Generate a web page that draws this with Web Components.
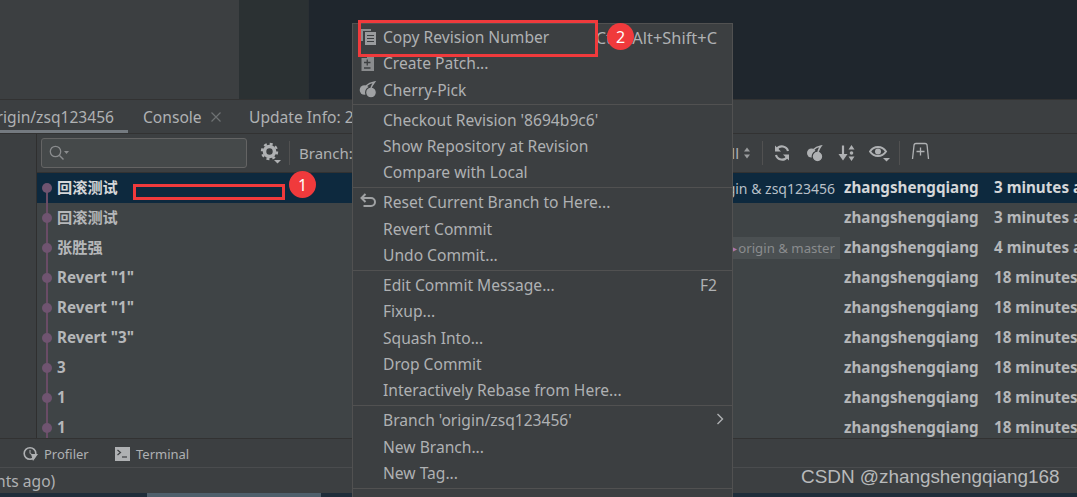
<!DOCTYPE html>
<html><head><meta charset="utf-8">
<style>
html,body{margin:0;padding:0;background:#3c3f41;overflow:hidden}
body{width:1077px;height:497px;font-family:"Noto Sans","Noto Sans CJK SC",sans-serif;font-size:15.6px;color:#afb1b3}
</style></head><body>
<ide-app></ide-app>
<script>
function el(name,css,html){customElements.define(name,class extends HTMLElement{constructor(){super();this.attachShadow({mode:'open'}).innerHTML='<style>'+css+'</style>'+(typeof html==='function'?html(this):html)}})}

el('top-panes',`:host{display:grid;grid-template-columns:239px 70px 1fr;height:99px;border-bottom:1px solid #323232}
.a{background:#3c3f41}.b{background:#2b3133;border-right:1px solid #2a2f33}.c{background:#1f262d}`,'<div class="a"></div><div class="b"></div><div class="c"></div>');

el('tab-bar',`:host{display:flex;height:33px;background:#3c3f41;border-bottom:1px solid #323232;align-items:center;overflow:hidden;white-space:nowrap;color:#afb1b3;position:relative;font-size:15.6px}
.t{display:flex;align-items:center;height:100%;position:relative;box-sizing:border-box;flex:none}
.a{width:128px;justify-content:flex-end;padding-right:14px}
.a::after{content:"";position:absolute;left:0;right:0;bottom:0;height:3px;background:#747a80}
.c{margin-left:15px;width:106px}
svg{margin-left:9px}`,`<div class="t a">origin/zsq123456</div><div class="t c">Console<svg width="10" height="10" viewBox="0 0 10 10"><path d="M.5.5l9 9M9.500.5l-9 9" stroke="#6e7173" stroke-width="1.200"/></svg></div><div class="t">Update Info: 2</div>`);

el('log-toolbar',`:host{display:flex;height:38px;align-items:center;background:#3c3f41;border-bottom:1px solid #323232;padding-left:4px;white-space:nowrap;overflow:hidden;font-size:15px}
.s{width:206px;height:30px;box-sizing:border-box;background:#45494a;border:1px solid #646464;border-radius:3px;display:flex;align-items:center;padding-left:6px;flex:none}
.g{margin-left:13px;flex:none}.sep{width:1px;height:24px;background:#515151;flex:none}
.b{margin-left:9px;width:440px;flex:none;display:flex;justify-content:space-between}
.i{flex:none;display:block}`,`<div class="s"><svg width="22" height="18" viewBox="0 0 22 18"><circle cx="7.500" cy="7.500" r="5.200" fill="none" stroke="#8a8c8e" stroke-width="1.300"/><path d="M11.500 11.500l4 4" stroke="#8a8c8e" stroke-width="1.500"/><path d="M16 7h5l-2.500 3z" fill="#8a8c8e"/></svg></div>
<svg class="g" width="22" height="22" viewBox="0 0 22 22"><circle cx="9.500" cy="9.500" r="5" fill="none" stroke="#afb1b3" stroke-width="3.600"/><circle cx="9.500" cy="9.500" r="7.600" fill="none" stroke="#afb1b3" stroke-width="2.200" stroke-dasharray="3 2.970"/><path d="M14 18h7l-3.500 3.500z" fill="#afb1b3"/></svg>
<div class="sep" style="margin-left:7px"></div><div class="b"><span>Branch:</span><span>All</span></div>
<svg class="i" width="10" height="14" viewBox="0 0 10 14" style="margin-left:3px"><path d="M5 1.500l3 4h-6zM5 12.500l-3-4h6z" fill="#9a9c9e"/></svg>
<div class="sep" style="margin-left:10px"></div>
<svg class="i" style="margin-left:10px" width="18" height="18" viewBox="0 0 18 18"><path d="M15 7A6.300 6.300 0 0 0 3.800 5M3 11A6.300 6.300 0 0 0 14.200 13" fill="none" stroke="#afb1b3" stroke-width="2.200"/><path d="M2 1.500v6h6zM16 16.500v-6h-6z" fill="#afb1b3"/></svg>
<svg class="i" style="margin-left:15px" width="18" height="18" viewBox="0 0 18 18"><circle cx="5.500" cy="9" r="4.500" fill="#afb1b3"/><circle cx="11.500" cy="12.500" r="5.300" fill="#afb1b3" stroke="#3c3f41" stroke-width="1.200"/><path d="M7 6c2-2 5-3.500 8-4-1.500 2-2.500 4-3 6" fill="none" stroke="#afb1b3" stroke-width="1.500"/></svg>
<svg class="i" style="margin-left:14px" width="18" height="18" viewBox="0 0 18 18"><path d="M5 1.500v10" stroke="#afb1b3" stroke-width="2.200"/><path d="M.5 10h9L5 16.500z" fill="#afb1b3"/><path d="M13.500 1l3 4.500h-6zM13.500 17l-3-4.500h6z" fill="#afb1b3"/><circle cx="13.500" cy="9" r="1.800" fill="#afb1b3"/></svg>
<svg class="i" style="margin-left:13px" width="22" height="20" viewBox="0 0 22 20"><path d="M1 8.500c4-6 12-6 16 0-4 6-12 6-16 0z" fill="none" stroke="#afb1b3" stroke-width="2"/><circle cx="9" cy="8.500" r="3" fill="#afb1b3"/><path d="M14 15h7l-3.500 3.500z" fill="#afb1b3"/></svg>
<div class="sep" style="margin-left:8px"></div>
<svg class="i" style="margin-left:11px;margin-bottom:4px" width="20" height="18" viewBox="0 0 20 18"><path d="M1.500 17L3 3.500Q3.100 1.500 5 1.500h9Q16 1.500 16.100 3.500L17.500 17M5.500 9.500h8M9.500 5.500v8" fill="none" stroke="#afb1b3" stroke-width="1.300"/></svg>`);

el('commit-row',`:host{display:block;height:30px;position:relative;overflow:hidden;background:var(--bg,#3f4446);color:#c0c2c4}
.line{position:absolute;left:9px;top:0;bottom:0;width:2px;background:#694c66}
:host([first]) .line{top:15px}
.dot{position:absolute;left:5px;top:10px;width:10px;height:10px;border-radius:50%;background:#6f5470}
.row{display:flex;height:28px;align-items:center;padding-left:20px;white-space:nowrap;font-weight:700;font-size:15.200px;position:relative}
.m{width:787px;flex:none;color:var(--mc,#b5b7b9)}
:host([cjk]) .m{padding-bottom:2px}
.a{width:150px;flex:none;color:var(--ac,#b5b7b9)}
.d{flex:none;color:var(--ac,#b5b7b9)}
.ref{position:absolute;right:237px;top:0;height:30px;display:flex;align-items:center;font-weight:400;font-size:14px;padding:0 5px 0 0;color:#b9c0c8}
:host([plain]) .ref{background:#4b5052;height:22px;top:4px;color:#8a8c8e;padding:0 5px;font-size:13.200px}
`,h=>`<div class="line"></div><div class="dot"></div><div class="row"><span class="m">${h.getAttribute('m')}</span><span class="a">zhangshengqiang</span><span class="d">${h.getAttribute('d')}</span></div>${h.getAttribute('ref')?`<div class="ref">${h.hasAttribute('plain')?'<span style="color:#a678b0;margin-right:1px;font-size:10px">▸</span>':''}${h.getAttribute('ref')}</div>`:''}`);

el('log-table',`:host{display:block;height:265px;overflow:hidden}`,`
<commit-row first cjk m="回滚测试" d="3 minutes ago" ref="origin &amp; zsq123456" style="--bg:#0d293e;--mc:#d5d7d9;--ac:#d5d7d9"></commit-row>
<commit-row cjk m="回滚测试" d="3 minutes ago"></commit-row>
<commit-row cjk m="张胜强" d="4 minutes ago" plain ref="origin &amp; master"></commit-row>
<commit-row m='Revert "1"' d="18 minutes ago"></commit-row>
<commit-row m='Revert "1"' d="18 minutes ago"></commit-row>
<commit-row m='Revert "3"' d="18 minutes ago"></commit-row>
<commit-row m="3" d="18 minutes ago"></commit-row>
<commit-row m="1" d="18 minutes ago"></commit-row>
<commit-row m="1" d="18 minutes ago"></commit-row>`);

el('tool-strip',`:host{display:flex;height:27px;padding-top:1px;align-items:center;background:#3c3f41;border-top:1px solid #323232;border-bottom:1px solid #4a4c4e;font-size:13px;color:#afb1b3;padding-left:23px}
svg{flex:none;margin-right:6px}.p{width:71px}`,`<svg width="15" height="16" viewBox="0 0 15 16"><circle cx="7" cy="7.500" r="5.800" fill="none" stroke="#afb1b3" stroke-width="1.600"/><path d="M7 4v3.500l2 1" stroke="#afb1b3" fill="none"/><path d="M8 8h7l-5 7z" fill="#afb1b3"/></svg><span class="p">Profiler</span><svg width="15" height="14" viewBox="0 0 15 14"><rect width="15" height="14" fill="#afb1b3"/><path d="M2.500 3l3 2.500-3 2.500" stroke="#3c3f41" stroke-width="1.200" fill="none"/><path d="M7 10h5" stroke="#3c3f41" stroke-width="1.200"/></svg><span>Terminal</span>`);

el('status-line',`:host{display:block;height:25px;line-height:26px;background:#3c3f41;font-size:15.600px;white-space:nowrap;overflow:hidden;color:#afb1b3}
span{display:block;margin-left:-4px}`,`<span>nts ago)</span>`);
el('bottom-strip',`:host{display:flex;height:4px;background:#1f2d3a}div{margin-left:147px;width:174px;background:#4f5f6b}`,`<div></div>`);

el('menu-item',`:host{display:flex;height:26.300px;align-items:center;position:relative;padding:0 15px 0 30px;white-space:nowrap;color:#afb1b3;font-size:15.600px}
span{flex:1}
::slotted([slot=ic]){position:absolute;left:6px;top:3px}
.k{flex:none}`,h=>`<slot name="ic"></slot><span><slot></slot></span><div class="k">${h.getAttribute('k')||''}<slot name="end"></slot></div>`);
el('menu-sep',`:host{display:block;height:1px;background:#515151;margin:1.400px 0 1.400px}`,``);

el('context-menu',`:host{position:absolute;left:352px;top:23px;width:381px;height:480px;box-sizing:border-box;background:#3c3f41;border:1px solid #515151;display:block;overflow:hidden}`,`
<menu-item><svg slot="ic" width="18" height="18" viewBox="0 0 18 18"><path d="M2 2h10v2H4v10H2z" fill="#8a8c8e"/><path d="M6 5h11v13H6z" fill="#9a9c9e"/><path d="M8 8.500h7M8 11.500h7M8 14.500h7" stroke="#3c3f41" stroke-width="1.200"/></svg>Copy Revision Number<span slot="end" style="font-size:16.400px">Ctrl+Alt+Shift+C</span></menu-item>
<menu-item><svg slot="ic" width="18" height="18" viewBox="0 0 18 18"><path d="M2.500 5H8V1h7v17H2.500z" fill="#8a8c8e"/><path d="M5 9.500h6.500M8.250 6.500v6M5 15h6.500" stroke="#3c3f41" stroke-width="1.300"/></svg>Create Patch...</menu-item>
<menu-item><svg slot="ic" width="18" height="18" viewBox="0 0 18 18"><circle cx="5.500" cy="10" r="4.800" fill="#a0a2a4"/><circle cx="12" cy="12.500" r="5.400" fill="#a0a2a4" stroke="#3c3f41" stroke-width="1.200"/><path d="M7 6c2-2 5-3.500 8.500-4-1.500 2-3 4-3.500 6" fill="none" stroke="#a0a2a4" stroke-width="1.500"/></svg>Cherry-Pick</menu-item>
<menu-sep></menu-sep>
<menu-item>Checkout Revision '8694b9c6'</menu-item>
<menu-item>Show Repository at Revision</menu-item>
<menu-item>Compare with Local</menu-item>
<menu-sep></menu-sep>
<menu-item><svg slot="ic" width="18" height="18" viewBox="0 0 18 18"><path d="M6.500 2L2.500 6l4 4M2.500 6h9.500a4 4 0 0 1 0 8H4.500" fill="none" stroke="#a0a2a4" stroke-width="2"/></svg>Reset Current Branch to Here...</menu-item>
<menu-item>Revert Commit</menu-item>
<menu-item>Undo Commit...</menu-item>
<menu-sep></menu-sep>
<menu-item k="F2">Edit Commit Message...</menu-item>
<menu-item>Fixup...</menu-item>
<menu-item>Squash Into...</menu-item>
<menu-item>Drop Commit</menu-item>
<menu-item>Interactively Rebase from Here...</menu-item>
<menu-sep></menu-sep>
<menu-item>Branch 'origin/zsq123456'<svg slot="end" width="8" height="12" viewBox="0 0 8 12" style="display:block;margin-bottom:2px;margin-right:-7px"><path d="M1.500 1l5 5-5 5" fill="none" stroke="#afb1b3" stroke-width="1.400"/></svg></menu-item>
<menu-item>New Branch...</menu-item>
<menu-item>New Tag...</menu-item>
<menu-sep></menu-sep>`);

el('red-box',`:host{position:absolute;box-sizing:border-box;border:3px solid #f03a3c;display:block}`,``);
el('num-badge',`:host{position:absolute;width:27px;height:27px;border-radius:50%;background:#f03a3c;color:#fff;display:flex;align-items:center;justify-content:center;font-size:16px}`,`<slot></slot>`);
el('water-mark',`:host{position:absolute;left:801px;top:466px;font-size:18.900px;color:#b8babb;white-space:nowrap;font-family:"Liberation Sans",sans-serif}`,`CSDN @zhangshengqiang168`);

el('ide-app',`:host{display:block;width:1077px;height:497px;position:relative;overflow:hidden}
.b{display:grid;grid-template-columns:37px 1fr;height:304px}
.l{background:#3c3f41;border-right:1px solid #2f2f2f}`,`
<top-panes></top-panes><tab-bar></tab-bar>
<div class="b"><div class="l"></div><div style="min-width:0"><log-toolbar></log-toolbar><log-table></log-table></div></div>
<tool-strip></tool-strip><status-line></status-line><bottom-strip></bottom-strip>
<context-menu></context-menu>
<red-box style="left:133px;top:184px;width:152px;height:16px"></red-box>
<red-box style="left:358px;top:20px;width:240px;height:37px"></red-box>
<num-badge style="left:289px;top:171px">1</num-badge>
<num-badge style="left:607px;top:23px">2</num-badge>
<water-mark></water-mark>`);
</script></body></html>
